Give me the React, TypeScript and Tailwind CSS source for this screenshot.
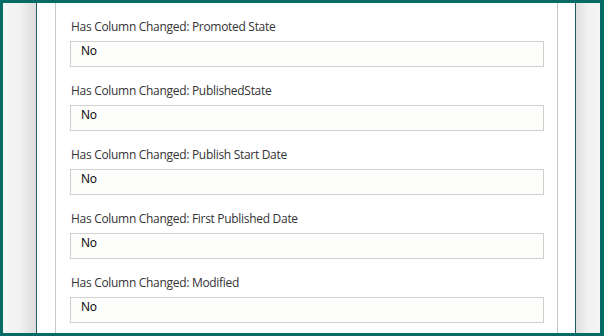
import React from 'react';

// Fields shown in the "has column changed" section of the form
const fields = [
  { label: 'Has Column Changed: Promoted State', value: 'No' },
  { label: 'Has Column Changed: PublishedState', value: 'No' },
  { label: 'Has Column Changed: Publish Start Date', value: 'No' },
  { label: 'Has Column Changed: First Published Date', value: 'No' },
  { label: 'Has Column Changed: Modified', value: 'No' },
];

const FieldRow: React.FC<{ label: string; value: string }> = ({ label, value }) => (
  <div className="flex flex-col h-[64px] shrink-0">
    <div className="h-[16px] leading-[16px] text-[12px] tracking-[-0.3px] text-[#333333] pl-[1px]">{label}</div>
    <div className="mt-[6px] h-[26px] border border-[#cfcfcf] bg-[#fdfdfb] pl-[10px] pt-[1px] leading-[16px] text-[12px] tracking-[-0.3px] text-black">
      {value}
    </div>
  </div>
);

export default function App() {
  return (
    <div
      className="w-[604px] h-[336px] overflow-hidden border-t-[3px] border-l-[3px] border-b-[3px] border-r-[4px] border-[#046b67] bg-[#f4f4f4] flex"
      style={{ fontFamily: '"Open Sans", "Noto Sans", Arial, sans-serif' }}
    >
      {/* left shaded gutter */}
      <div className="w-[33px] shrink-0 bg-gradient-to-r from-[#f5f5f5] via-[#f2f2f2] to-[#dcdcdc]" />

      {/* main panel */}
      <div className="w-[540px] shrink-0 bg-white border-x border-[#1d5e5b] pl-[18px] pr-[17px]">
        <div className="h-full border-x border-[#c8c8c8] pl-[14px] pr-[13px] pt-[16px] flex flex-col">
          {fields.map((f) => (
            <FieldRow key={f.label} label={f.label} value={f.value} />
          ))}
        </div>
      </div>

      {/* right shaded gutter */}
      <div className="flex-1 bg-gradient-to-r from-[#dedede] via-[#f1f1f1] to-[#f5f5f5]" />
    </div>
  );
}
